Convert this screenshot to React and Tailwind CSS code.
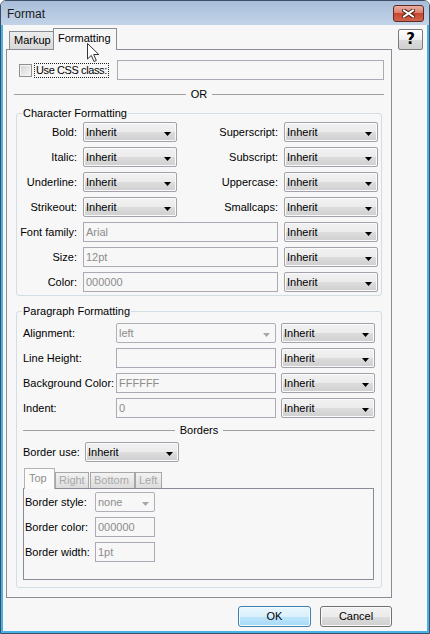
import React from "react";

const btnGrad =
  "bg-[linear-gradient(#f2f2f2_0%,#ebebeb_50%,#dddddd_50%,#cfcfcf_100%)]";

const Arrow = ({ disabled }) => (
  <svg width="7" height="4" viewBox="0 0 7 4" className="mt-[3px] shrink-0">
    <path d="M0 0H7L3.5 4Z" fill={disabled ? "#a6a6a6" : "#000"} />
  </svg>
);

const Select = ({ value = "Inherit", className = "" }) => (
  <div
    className={`h-[20px] flex items-center justify-between pl-[2px] pr-[5px] border border-[#a3a1a9] rounded-[2px] ${btnGrad} shadow-[inset_0_0_0_1px_#fafafa] ${className}`}
  >
    <span>{value}</span>
    <Arrow />
  </div>
);

const DisabledSelect = ({ value, className = "" }) => (
  <div
    className={`h-[20px] flex items-center justify-between pl-[2px] pr-[5px] border border-[#b1aeb8] rounded-[2px] text-[#8c8c8c] ${className}`}
  >
    <span>{value}</span>
    <Arrow disabled />
  </div>
);

const Field = ({ value = "", className = "" }) => (
  <div
    className={`h-[20px] flex items-center pl-[2px] border border-[#aca9b4] text-[#8c8c8c] ${className}`}
  >
    {value}
  </div>
);

const Label = ({ children }) => (
  <div className="h-[20px] flex items-center justify-end whitespace-nowrap">
    {children}
  </div>
);

const Divider = ({ text, className = "" }) => (
  <div className={`flex items-center h-[13px] ${className}`}>
    <div className="flex-1 h-px bg-[#a0a0a0]" />
    <span className="px-[5px]">{text}</span>
    <div className="flex-1 h-px bg-[#a0a0a0]" />
  </div>
);

const ParaRow = ({ label, field }) => (
  <div className="flex items-center h-[20px]">
    <div className="w-[93px] whitespace-nowrap">{label}</div>
    {field}
    <Select className="ml-[5px] w-[94px]" />
  </div>
);

const BorderRow = ({ label, children }) => (
  <div className="flex items-center h-[20px]">
    <div className="w-[70px] whitespace-nowrap">{label}</div>
    {children}
  </div>
);

const Cursor = () => (
  <svg
    width="13"
    height="20"
    viewBox="0 0 13 20"
    className="absolute left-[86px] top-[42px] z-20"
  >
    <path
      d="M0.5 0.5V16L4.3 12.4L7 18.5L9.3 17.5L6.7 11.5H11.8Z"
      fill="#fff"
      stroke="#333"
      strokeWidth="1"
    />
  </svg>
);

export default function App() {
  return (
    <div className="relative w-[430px] h-[634px] flex flex-col border border-[#3c4f66] rounded-t-[6px] overflow-hidden font-['Liberation_Sans',Arial,sans-serif] text-[11px] leading-[13px] text-black">
      {/* Title bar */}
      <div className="h-[24px] flex justify-between bg-[linear-gradient(#a8bdd9_0%,#b3c7e0_40%,#c2d3e8_100%)]">
        <span className="ml-[6px] mt-[6px] text-[12px] leading-[14px] text-[#1b1b1b]">
          Format
        </span>
        <div className="mt-[4px] mr-[5px] w-[31px] h-[17px] flex items-center justify-center rounded-[3px] border border-[#5e2b25] bg-[linear-gradient(#eab0a3_0%,#d97a66_50%,#c8452d_50%,#d0664d_100%)]">
          <svg width="13" height="9" viewBox="0 0 13 9">
            <path
              d="M2 1.5L11 7.5M11 1.5L2 7.5"
              stroke="#4a1e18"
              strokeWidth="4"
              strokeLinecap="square"
            />
            <path
              d="M2 1.5L11 7.5M11 1.5L2 7.5"
              stroke="#fff"
              strokeWidth="2"
              strokeLinecap="square"
            />
          </svg>
        </div>
      </div>

      {/* Body */}
      <div className="flex-1 flex flex-col border-x-2 border-b-2 border-[#45b3e6] bg-[#f7f7f7]">
        <div className="flex items-start pt-[3px] pl-[3px]">
          <div className="w-[386px]">
            {/* Tabs */}
            <div className="flex items-end h-[21px] pl-[3px]">
              <div className="h-[18px] w-[45px] flex items-center pl-[4px] border border-b-0 border-[#898c95] bg-[linear-gradient(#ececec,#d8d8d8)]">
                Markup
              </div>
              <div className="relative z-10 -ml-px -mb-px h-[22px] w-[64px] flex items-center pl-[4px] pb-[2px] border border-b-0 border-[#898c95] bg-[#f7f7f7]">
                Formatting
              </div>
            </div>

            {/* Panel */}
            <div className="h-[549px] border border-[#898c95] bg-[#f7f7f7] flex flex-col">
              <div className="mt-[10px] flex items-center h-[20px] pl-[12px] pr-[7px]">
                <div className="w-[13px] h-[13px] border border-[#8f8f8f] bg-[linear-gradient(135deg,#d4d4d4,#f6f6f6)] shadow-[inset_0_0_0_1px_#f4f4f4]" />
                <div className="ml-[2px] h-[15px] flex items-center px-[1px] border border-dotted border-[#222] whitespace-nowrap tracking-[-0.4px]">
                  Use CSS class:
                </div>
                <Field className="ml-[8px] flex-1" />
              </div>

              <Divider text="OR" className="mt-[8px] px-[7px]" />

              {/* Character Formatting */}
              <fieldset className="mt-[6px] mx-[9px] border border-[#d3dde4] rounded-[3px] pt-[2px] pb-[3px]">
                <legend className="ml-[5px] px-[1px] leading-[13px]">
                  Character Formatting
                </legend>
                <div className="grid grid-cols-[60px_94px_95px_94px] gap-x-[6px] gap-y-[5px]">
                  <Label>Bold:</Label>
                  <Select />
                  <Label>Superscript:</Label>
                  <Select />
                  <Label>Italic:</Label>
                  <Select />
                  <Label>Subscript:</Label>
                  <Select />
                  <Label>Underline:</Label>
                  <Select />
                  <Label>Uppercase:</Label>
                  <Select />
                  <Label>Strikeout:</Label>
                  <Select />
                  <Label>Smallcaps:</Label>
                  <Select />
                  <Label>Font family:</Label>
                  <Field value="Arial" className="col-span-2" />
                  <Select />
                  <Label>Size:</Label>
                  <Field value="12pt" className="col-span-2" />
                  <Select />
                  <Label>Color:</Label>
                  <Field value="000000" className="col-span-2" />
                  <Select />
                </div>
              </fieldset>

              {/* Paragraph Formatting */}
              <fieldset className="mt-[9px] mx-[9px] border border-[#d3dde4] rounded-[3px] pt-[5px] pb-[7px] px-[6px]">
                <legend className="-ml-px px-[1px] leading-[13px]">
                  Paragraph Formatting
                </legend>
                <div className="flex flex-col gap-[5px]">
                  <ParaRow
                    label="Alignment:"
                    field={<DisabledSelect value="left" className="w-[160px]" />}
                  />
                  <ParaRow
                    label="Line Height:"
                    field={<Field className="w-[160px]" />}
                  />
                  <ParaRow
                    label="Background Color:"
                    field={<Field value="FFFFFF" className="w-[160px]" />}
                  />
                  <ParaRow
                    label="Indent:"
                    field={<Field value="0" className="w-[160px]" />}
                  />
                </div>

                <Divider text="Borders" className="mt-[6px]" />

                <div className="mt-[5px] flex items-center h-[20px]">
                  <div className="w-[62px] whitespace-nowrap">Border use:</div>
                  <Select className="w-[94px]" />
                </div>

                {/* Border sub-tabs */}
                <div className="mt-[6px] flex items-end h-[20px] pl-px">
                  <div className="relative z-10 -mb-px h-[21px] w-[31px] flex items-start pt-[3px] pl-[4px] border border-b-0 border-[#b4b4b4] bg-[#fbfbfb] text-[#8e8e8e]">
                    Top
                  </div>
                  <div className="h-[16px] w-[34px] flex items-center pl-[3px] border border-b-0 border-[#a7a7a7] bg-[linear-gradient(#f3f3f3,#dcdcdc)] text-[#a8a8a8]">
                    Right
                  </div>
                  <div className="ml-px h-[16px] w-[45px] flex items-center pl-[3px] border border-b-0 border-[#a7a7a7] bg-[linear-gradient(#f3f3f3,#dcdcdc)] text-[#a8a8a8]">
                    Bottom
                  </div>
                  <div className="h-[16px] w-[27px] flex items-center pl-[3px] border border-b-0 border-[#a7a7a7] bg-[linear-gradient(#f3f3f3,#dcdcdc)] text-[#a8a8a8]">
                    Left
                  </div>
                </div>
                <div className="w-[351px] h-[92px] border border-[#898c95] pt-[3px] pl-px flex flex-col gap-[5px]">
                  <BorderRow label="Border style:">
                    <DisabledSelect value="none" className="w-[60px]" />
                  </BorderRow>
                  <BorderRow label="Border color:">
                    <Field value="000000" className="w-[60px]" />
                  </BorderRow>
                  <BorderRow label="Border width:">
                    <Field value="1pt" className="w-[60px]" />
                  </BorderRow>
                </div>
              </fieldset>
            </div>
          </div>

          {/* Help button */}
          <div className="ml-[6px] mt-[1px] w-[25px] h-[21px] flex items-center justify-center rounded-[2px] border border-[#7b7b7b] bg-[linear-gradient(#ffffff_0%,#f0f0f0_50%,#dcdcdc_50%,#cfcfcf_100%)] font-['DejaVu_Sans',sans-serif] font-bold text-[15px] leading-none">
            ?
          </div>
        </div>

        {/* Buttons */}
        <div className="mt-[8px] flex justify-end gap-[9px] pr-[35px]">
          <div className="w-[73px] h-[21px] flex items-center justify-center rounded-[3px] border border-[#3c7fb1] bg-[linear-gradient(#eaf6fd_0%,#d9f0fc_50%,#bee6fd_50%,#a7d9f5_100%)] shadow-[inset_0_0_0_1px_#f4fbff]">
            OK
          </div>
          <div
            className={`w-[72px] h-[21px] flex items-center justify-center rounded-[3px] border border-[#707070] ${btnGrad} shadow-[inset_0_0_0_1px_#fafafa]`}
          >
            Cancel
          </div>
        </div>
      </div>

      <Cursor />
    </div>
  );
}
